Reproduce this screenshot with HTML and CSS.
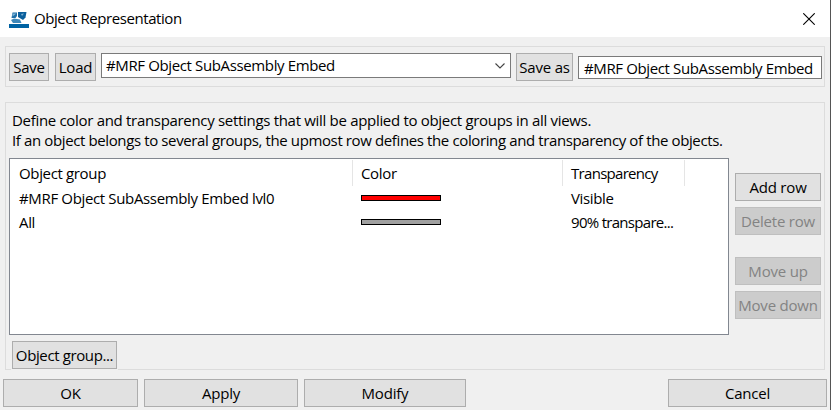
FILE: index.html
```html
<!DOCTYPE html>
<html lang="en">
<head>
	<meta charset="UTF-8">
	<title>Object Representation</title>
	<link rel="stylesheet" href="styles.css">
</head>
<body>
	<div class="dialog">
		<div class="titlebar">
			<svg class="logo" width="20" height="18" viewBox="0 0 20 18">
				<path d="M3.500 1.500h4.500v3.500l-1.500 2H2.500z" fill="#1f6fa8"/>
				<path d="M9 1h8.500l-1 5.500-2.500 2.500-5-3z" fill="#0b5f9c"/>
				<path d="M3.500 2.500h4l-4 3zM12 3l3-.5-2 2.500z" fill="#7fb3d5"/>
				<path d="M2 9l3-1.500 6 1L12.500 12H4z" fill="#3f88b9"/>
				<path d="M0 13h20v4H0z" fill="#0063a3"/>
			</svg>
			<span class="title">Object Representation</span>
			<svg class="close" width="12" height="12" viewBox="0 0 12 12">
				<path d="M.3.3l11.400 11.400M11.700.3.3 11.700" stroke="#000" stroke-width="1.100"/>
			</svg>
		</div>

		<div class="group presets">
			<button class="btn save">Save</button>
			<button class="btn load">Load</button>
			<div class="combo">
				<span class="label">#MRF Object SubAssembly Embed</span>
				<svg width="10" height="6" viewBox="0 0 10 6">
					<path d="M.5.5 5 5 9.500.5" fill="none" stroke="#444" stroke-width="1.100"/>
				</svg>
			</div>
			<button class="btn save-as">Save as</button>
			<div class="field"><span class="label">#MRF Object SubAssembly Embed</span></div>
		</div>

		<div class="group settings">
			<p class="info"><span class="line1">Define color and transparency settings that will be applied to object groups in all views.</span><br><span class="line2">If an object belongs to several groups, the upmost row defines the coloring and transparency of the objects.</span></p>
			<div class="main">
				<div class="list">
					<div class="row head">
						<span>Object group</span>
						<span>Color</span>
						<span class="tight">Transparency</span>
					</div>
					<div class="row">
						<span>#MRF Object SubAssembly Embed lvl0</span>
						<span><i class="swatch red"></i></span>
						<span>Visible</span>
					</div>
					<div class="row">
						<span>All</span>
						<span><i class="swatch gray"></i></span>
						<span class="tight">90% transpare...</span>
					</div>
				</div>
				<div class="side">
					<button class="btn">Add row</button>
					<button class="btn" disabled>Delete row</button>
					<button class="btn move" disabled>Move up</button>
					<button class="btn" disabled>Move down</button>
				</div>
			</div>
			<button class="btn object-group">Object group...</button>
		</div>

		<div class="footer">
			<button class="btn ok">OK</button>
			<button class="btn apply">Apply</button>
			<button class="btn modify">Modify</button>
			<button class="btn cancel">Cancel</button>
		</div>
	</div>
</body>
</html>
```
FILE: styles.css
```css
* {
	box-sizing: border-box;
}
body {
	margin: 0;
	background: #f0f0f0;
	font: 15px/20px "Open Sans", "Noto Sans", sans-serif;
	letter-spacing: -.2px;
	color: #000;
	overflow: hidden;
}
.dialog {
	width: 831px;
	height: 410px;
	border-right: 1px solid #555;
}
.titlebar {
	display: flex;
	align-items: center;
	height: 37px;
	padding: 0 15px 0 9px;
	background: #fff;
}
.logo {
	margin-top: 3px;
}
.title {
	margin: 0 0 2px 5px;
	letter-spacing: -.43px;
}
.close {
	margin-left: auto;
}

.group {
	width: 820px;
	margin-left: 5px;
	border: 1px solid #dcdcdc;
}
.btn {
	flex: none;
	height: 28px;
	padding: 0;
	border: 1px solid #adadad;
	background: #e1e1e1;
	font: inherit;
	letter-spacing: inherit;
	color: #000;
	white-space: nowrap;
}
.btn:disabled {
	border-color: #bfbfbf;
	background: #ccc;
	color: #838383;
}
.label {
	letter-spacing: -.37px;
}

.presets {
	display: flex;
	align-items: flex-start;
	height: 41px;
	margin-top: 9px;
	padding: 6px 0 0 3px;
}
.save {
	width: 40px;
	margin-right: 6px;
}
.load {
	width: 41px;
	margin-right: 5px;
}
.combo {
	display: flex;
	align-items: center;
	justify-content: space-between;
	width: 410px;
	height: 25px;
	margin-right: 5px;
	padding: 0 5px 0 4px;
	border: 1px solid #7a7a7a;
	background: #fff;
}
.combo .label {
	margin-bottom: 2px;
}
.save-as {
	width: 57px;
	margin-right: 5px;
}
.field {
	width: 244px;
	height: 23px;
	margin-top: 3px;
	padding-left: 5px;
	border: 1px solid #7a7a7a;
	background: #fff;
	line-height: 23px;
	white-space: nowrap;
}

.settings {
	height: 268px;
	margin-top: 15px;
	padding: 7px 3px 0;
}
.info {
	margin: 0 0 8px 3px;
	white-space: nowrap;
}
.line1 {
	letter-spacing: -.31px;
}
.line2 {
	letter-spacing: -.38px;
}
.main {
	display: flex;
}
.list {
	width: 720px;
	height: 177px;
	border: 1px solid #828790;
	background: #fff;
}
.row {
	display: grid;
	grid-template-columns: 343px 210px 122px;
	height: 24px;
	line-height: 24px;
	letter-spacing: -.35px;
}
.row span {
	padding-left: 8px;
	white-space: nowrap;
}
.row span:first-child {
	padding-left: 9px;
}
.row .tight {
	letter-spacing: -.7px;
}
.head {
	height: 27px;
	padding-top: 1px;
	line-height: 26px;
}
.head span {
	height: 26px;
	border-right: 1px solid #e5e5e5;
}
.swatch {
	display: block;
	width: 80px;
	height: 6px;
	margin-top: 9px;
	border: 1px solid #000;
}
.red {
	background: #f00;
}
.gray {
	background: #a0a0a0;
}
.side {
	display: flex;
	flex-direction: column;
	gap: 6px;
	width: 86px;
	margin: 15px 0 0 6px;
}
.move {
	margin-top: 16px;
}
/* covers the group border under the button */
.object-group {
	display: block;
	width: 105px;
	margin: 6px 0 0 3px;
	box-shadow: 0 0 0 1px #f0f0f0;
	letter-spacing: -.38px;
}

.footer {
	display: flex;
	gap: 6px;
	margin-top: 9px;
	padding: 0 3px;
}
.ok {
	width: 135px;
}
.apply {
	width: 154px;
}
.modify {
	width: 162px;
}
.cancel {
	width: 159px;
	margin-left: auto;
}
```
